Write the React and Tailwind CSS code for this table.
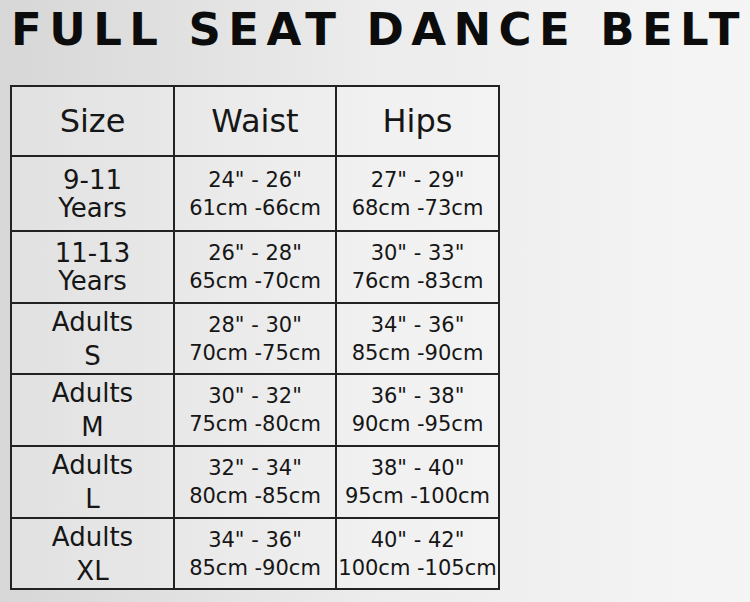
const rows = [
  ['9-11', 'Years', '24" - 26"', '61cm -66cm', '27" - 29"', '68cm -73cm', 75, false],
  ['11-13', 'Years', '26" - 28"', '65cm -70cm', '30" - 33"', '76cm -83cm', 72, false],
  ['Adults', 'S', '28" - 30"', '70cm -75cm', '34" - 36"', '85cm -90cm', 71, true],
  ['Adults', 'M', '30" - 32"', '75cm -80cm', '36" - 38"', '90cm -95cm', 72, true],
  ['Adults', 'L', '32" - 34"', '80cm -85cm', '38" - 40"', '95cm -100cm', 72, true],
  ['Adults', 'XL', '34" - 36"', '85cm -90cm', '40" - 42"', '100cm -105cm', 71, true],
]

const font = { fontFamily: '"DejaVu Sans", "Noto Sans", sans-serif' }

export default function App() {
  return (
    <div
      className="w-[750px] h-[602px] overflow-hidden bg-gradient-to-r from-[#d7d7d7] via-[#ececec] to-[#f5f5f5] text-[#161616]"
      style={font}
    >
      <h1 className="pl-[11px] pt-[3px] h-[85px] text-[45px] leading-[54px] font-bold tracking-[0.165em] whitespace-nowrap text-[#0c0c0c]">
        FULL SEAT DANCE BELT
      </h1>
      <table className="ml-[10px] table-fixed border-collapse border-2 border-[#222] w-[488px] bg-white/25">
        <colgroup>
          <col className="w-[163px]" />
          <col className="w-[162px]" />
          <col className="w-[163px]" />
        </colgroup>
        <thead>
          <tr className="h-[70px]">
            {['Size', 'Waist', 'Hips'].map(h => (
              <th key={h} className="border-2 border-[#222] text-[32px] font-normal text-center align-middle">{h}</th>
            ))}
          </tr>
        </thead>
        <tbody>
          {rows.map(r => (
            <tr key={r[0] + r[1]} style={{ height: r[6] }}>
              <td className={`border-2 border-[#222] text-center text-[26px] ${r[7] ? 'leading-[34px]' : 'leading-[28px]'}`}>
                <div>{r[0]}</div>
                <div>{r[1]}</div>
              </td>
              <td className="border-2 border-[#222] text-center text-[21px] leading-[28px] whitespace-nowrap">
                <div>{r[2]}</div>
                <div>{r[3]}</div>
              </td>
              <td className="border-2 border-[#222] text-center text-[21px] leading-[28px] whitespace-nowrap">
                <div>{r[4]}</div>
                <div>{r[5]}</div>
              </td>
            </tr>
          ))}
        </tbody>
      </table>
    </div>
  )
}
